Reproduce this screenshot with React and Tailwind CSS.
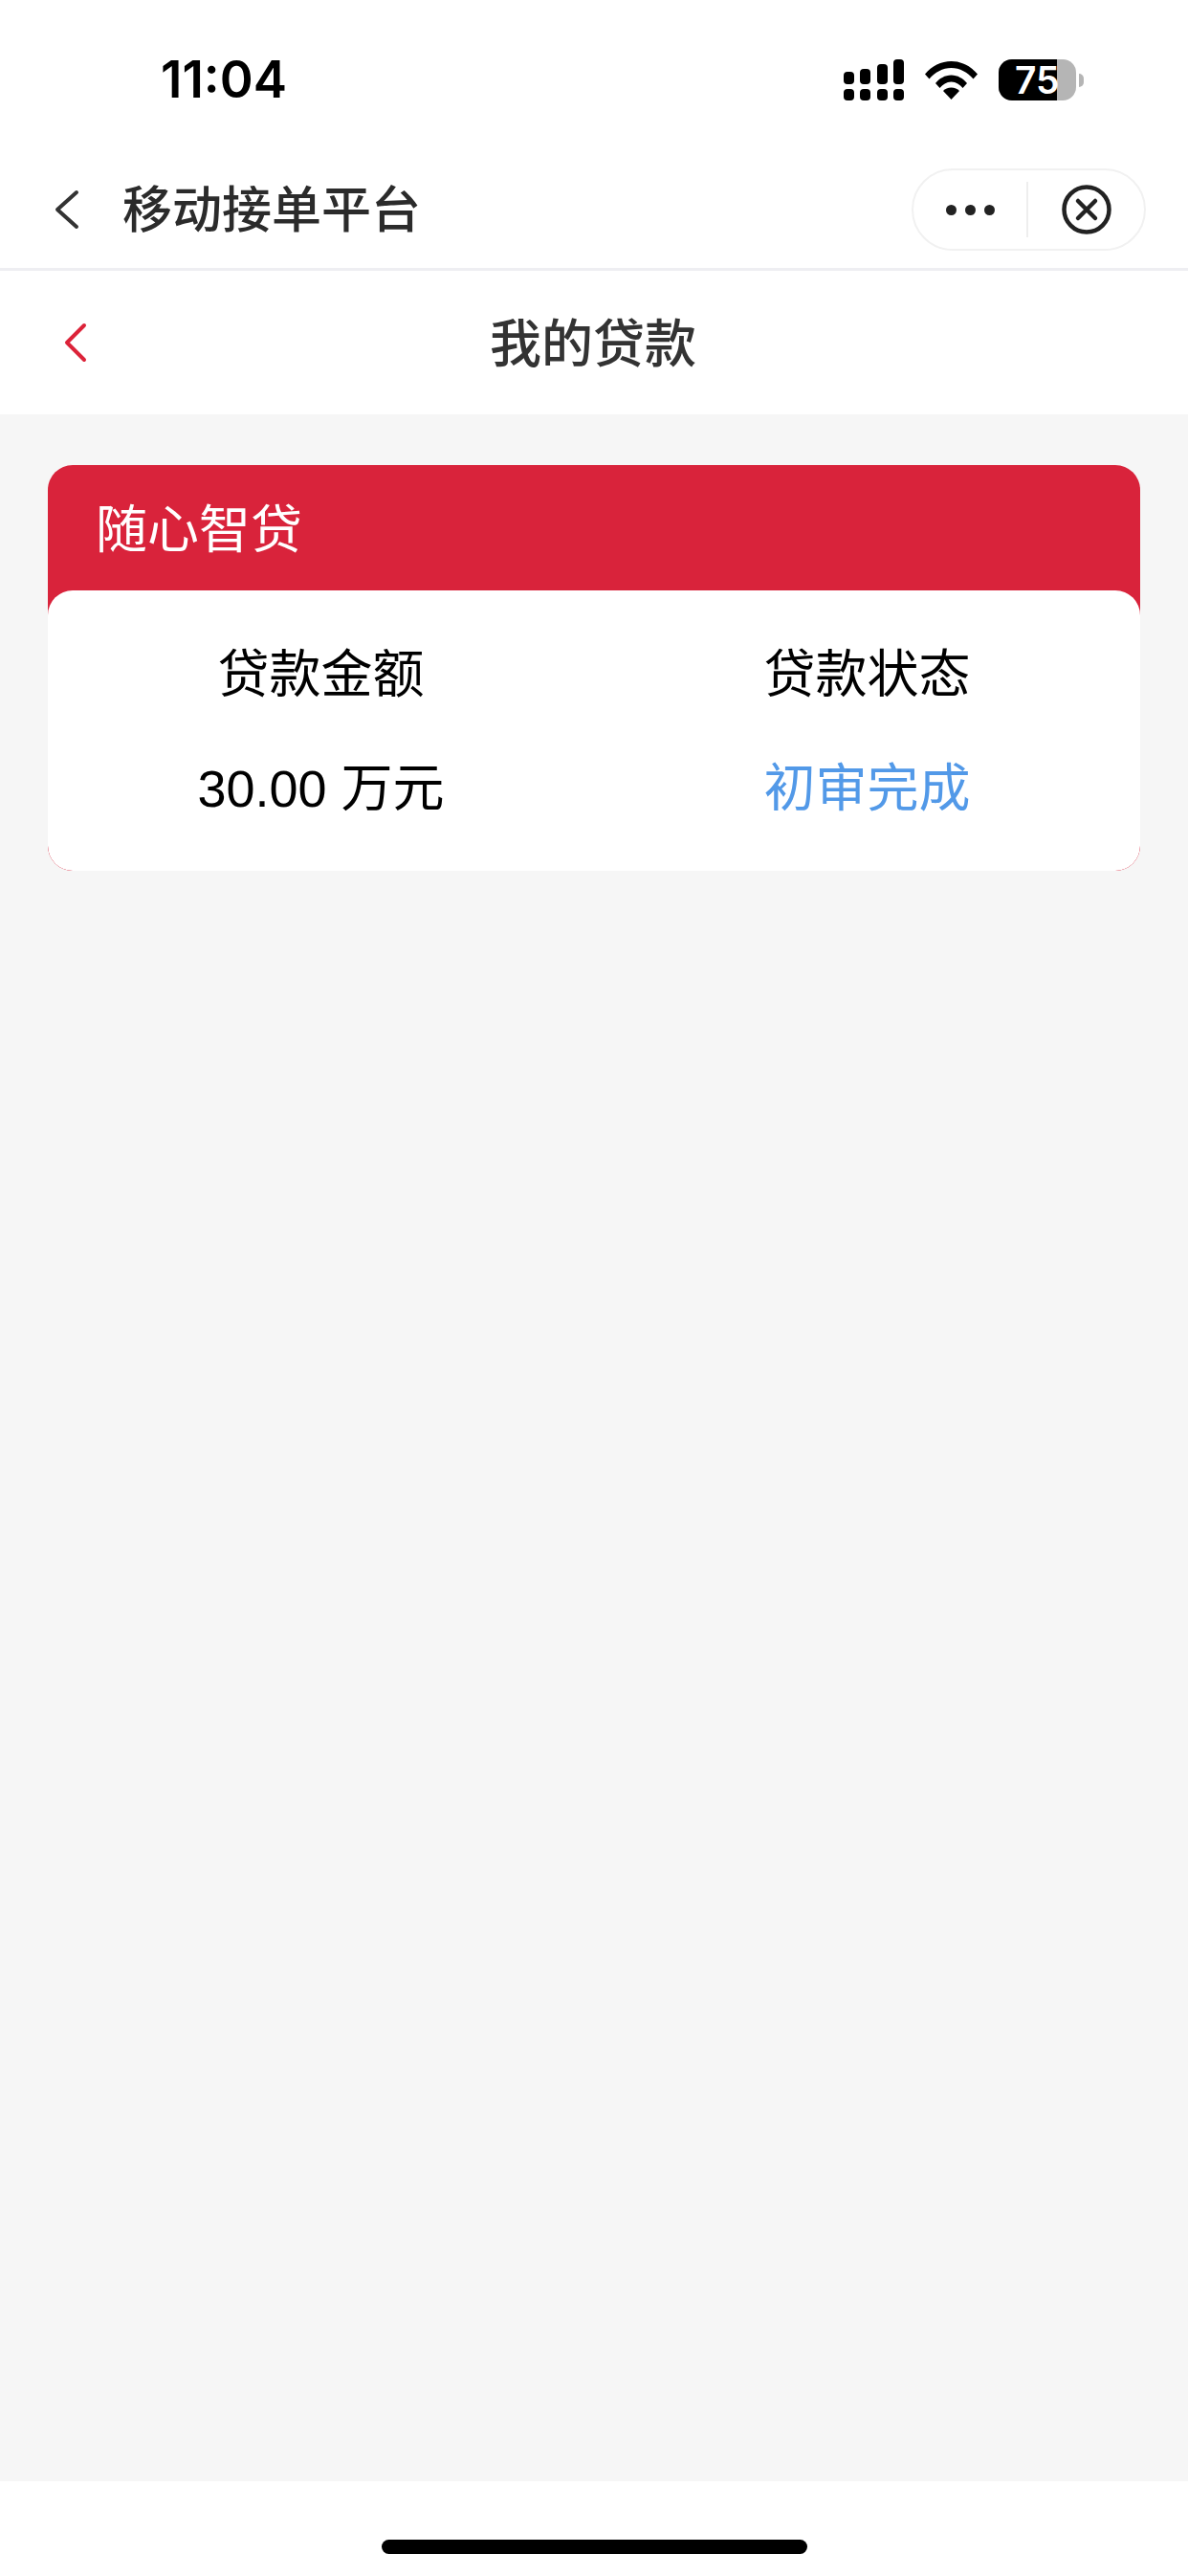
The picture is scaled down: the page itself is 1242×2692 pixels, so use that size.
import React from "react";

const cjk = "font-['Inter','Noto_Sans_CJK_SC',sans-serif]";

const StatusIcons = () => (
  <div className="flex items-center gap-[22px]">
    <svg width="63" height="43" viewBox="0 0 63 43" fill="#000">
      <rect x="0" y="13" width="11" height="13" rx="4" />
      <rect x="17" y="10" width="11" height="16" rx="4" />
      <rect x="35" y="5" width="11" height="21" rx="4" />
      <rect x="52" y="0" width="11" height="26" rx="4" />
      <rect x="0" y="31" width="11" height="12" rx="4" />
      <rect x="17" y="31" width="11" height="12" rx="4" />
      <rect x="35" y="31" width="11" height="12" rx="4" />
      <rect x="52" y="31" width="11" height="12" rx="4" />
    </svg>
    <svg width="55" height="40" viewBox="0 0 55 40" fill="#000">
      <path d="M0 13.5C7 5 17 0 27.5 0S48 5 55 13.5L50.5 18.5C44.5 11.500 36.500 7 27.500 7S10.500 11.500 4.500 18.500Z" />
      <path d="M11 23C15 18 21 14.500 27.500 14.500S40 18 44 23L39.500 28C36.500 24.500 32.500 21.500 27.500 21.500S18.500 24.500 15.500 28Z" />
      <path d="M19 31C21 28.800 24 27.500 27.500 27.500S34 28.800 36 31L27.500 40Z" />
    </svg>
    <div className="flex items-center gap-[3px]">
      <div className="relative h-[43px] w-[81px]">
        <div className="flex size-full overflow-hidden rounded-[14px] bg-[#b5b5b5]">
          <div className="h-full w-[61px] bg-black" />
        </div>
        <span className="absolute left-[17px] top-0 font-['Inter',sans-serif] text-[39px] leading-[43px] font-semibold text-white">
          75
        </span>
      </div>
      <div className="h-[14px] w-[5px] rounded-r-full bg-[#b5b5b5]" />
    </div>
  </div>
);

const App = () => {
  return (
    <div className={`flex h-[2692px] w-[1242px] flex-col bg-white ${cjk}`}>
      {/* status bar */}
      <div className="flex h-[166px] shrink-0 items-start justify-between pr-[109px] pl-[168px] pt-[62px]">
        <span className="font-['Inter',sans-serif] text-[53px] leading-[43px] font-semibold text-black">
          11:04
        </span>
        <StatusIcons />
      </div>

      {/* mini program nav */}
      <div className="flex h-[117px] shrink-0 items-start justify-between border-b-[3px] border-[#eeeef2] pr-[44px] pl-[56px]">
        <div className="flex h-[104px] items-center">
          <svg className="mt-[2px]" width="28" height="42" viewBox="0 0 28 42" fill="none" stroke="#333" strokeWidth="4" strokeLinecap="round" strokeLinejoin="round">
            <path d="M24 3 4 21l20 18" />
          </svg>
          <span className="mt-[3px] ml-[44px] text-[52px] leading-none font-medium text-[#2b2b2b]">移动接单平台</span>
        </div>
        <div className="mt-[10px] flex h-[86px] w-[245px] items-center rounded-full border-2 border-[#f1f1f1] bg-white">
          <div className="flex w-[118px] items-center justify-center gap-[9px]">
            <span className="size-[11px] rounded-full bg-[#222]" />
            <span className="size-[11px] rounded-full bg-[#222]" />
            <span className="size-[11px] rounded-full bg-[#222]" />
          </div>
          <div className="h-[58px] w-[2px] bg-[#eeeeee]" />
          <div className="flex flex-1 items-center justify-center">
            <svg width="52" height="52" viewBox="0 0 52 52" fill="none" stroke="#222" strokeWidth="4.500" strokeLinecap="round">
              <circle cx="26" cy="26" r="23.500" />
              <path d="m17 17 18 18M35 17 17 35" />
            </svg>
          </div>
        </div>
      </div>

      {/* page title */}
      <div className="relative flex h-[150px] shrink-0 items-center justify-center pt-[4px]">
        <svg className="absolute left-[67px] top-[54px]" width="25" height="42" viewBox="0 0 25 42" fill="none" stroke="#dc2339" strokeWidth="4" strokeLinecap="round" strokeLinejoin="round">
          <path d="M21 3 3 21l18 18" />
        </svg>
        <span className="-ml-[2px] text-[54px] leading-none font-medium text-[#333333]">我的贷款</span>
      </div>

      {/* content */}
      <div className="flex-1 bg-[#f6f6f6] px-[50px] pt-[53px]">
        <div className="overflow-hidden rounded-[26px] bg-[#d9233b]">
          <div className="flex h-[131px] items-center pl-[50px] pt-[5px] text-[54px] leading-none text-white">随心智贷</div>
          <div className="grid h-[293px] grid-cols-2 rounded-[26px] bg-white pt-[61px] text-center text-[54px] leading-none text-black">
            <div className="flex flex-col gap-[65px]">
              <span>贷款金额</span>
              <span className="font-['Liberation_Sans','Noto_Sans_CJK_SC',sans-serif]">30.00 万元</span>
            </div>
            <div className="flex flex-col gap-[65px]">
              <span>贷款状态</span>
              <span className="text-[#5299e8]">初审完成</span>
            </div>
          </div>
        </div>
      </div>

      {/* home indicator */}
      <div className="flex h-[99px] shrink-0 justify-center bg-white pt-[61px]">
        <div className="h-[15px] w-[445px] rounded-full bg-black" />
      </div>
    </div>
  );
};

export default App;
